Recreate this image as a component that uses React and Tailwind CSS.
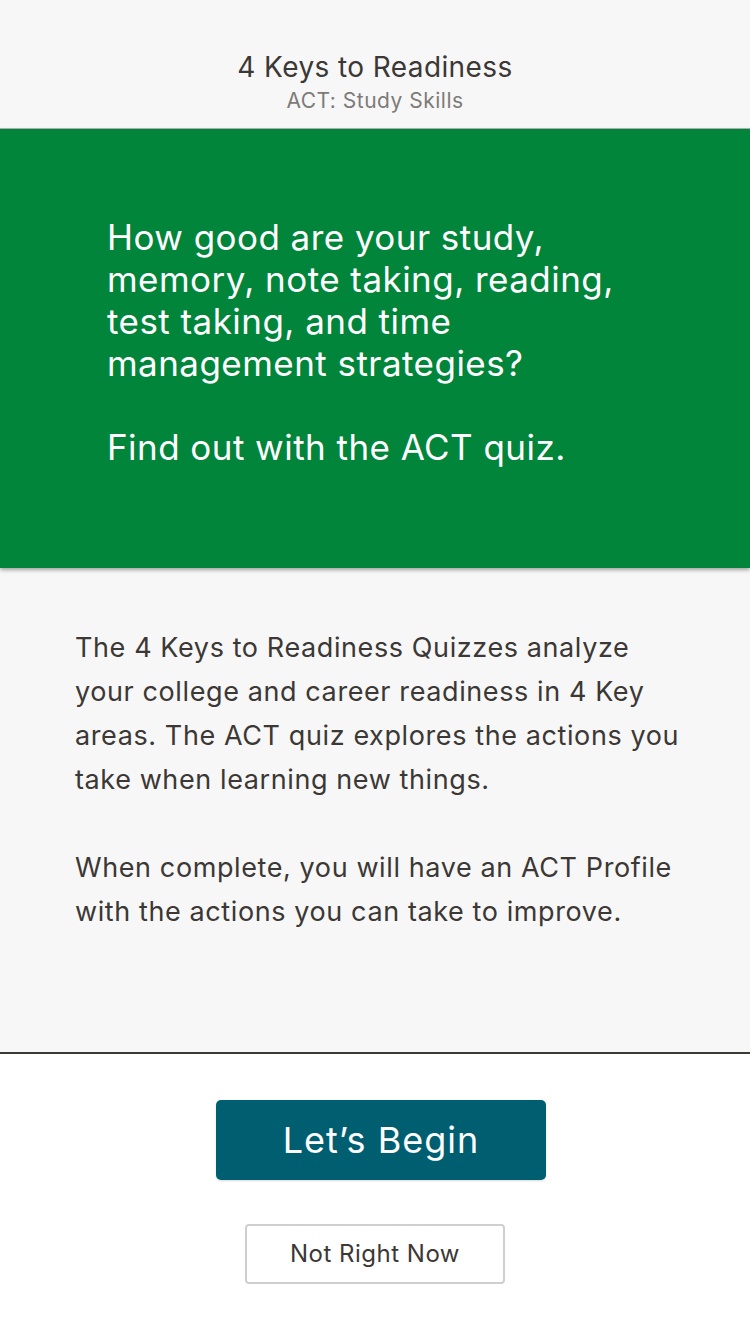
export default function App() {
  return (
    <div className="w-[750px] h-[1334px] flex flex-col bg-white text-[#3b3835]" style={{ fontFamily: 'Inter, "Noto Sans", sans-serif' }}>
      <header className="h-[129px] bg-[#f7f7f7] border-b border-[#b3b3b3] flex flex-col items-center pt-[48px]">
        <div className="text-[28px] leading-[38px] tracking-[0.4px] text-[#3b3835]">4 Keys to Readiness</div>
        <div className="text-[21px] leading-[26px] tracking-[0.5px] text-[#7d7b78] mt-[2px]">ACT: Study Skills</div>
      </header>
      <section className="h-[439px] bg-[#00853a] pl-[107px] pr-[100px] pt-[87px] text-white text-[35px] leading-[42px] tracking-[0.45px] relative z-10 shadow-[0_2px_4px_rgba(0,0,0,0.35)]">
        <p>How good are your study, memory, note taking, reading, test taking, and time management strategies?</p>
        <p className="mt-[42px]">Find out with the ACT quiz.</p>
      </section>
      <section className="h-[486px] bg-[#f7f7f7] border-b-2 border-[#3b3835] pl-[75px] pr-[60px] pt-[58px] text-[27px] leading-[44px] tracking-[0.6px]">
        <p>The 4 Keys to Readiness Quizzes analyze your college and career readiness in 4 Key areas. The ACT quiz explores the actions you take when learning new things.</p>
        <p className="mt-[44px]">When complete, you will have an ACT Profile with the actions you can take to improve.</p>
      </section>
      <div className="flex flex-col items-center pt-[46px]">
        <button className="ml-[12px] w-[330px] h-[80px] rounded-[5px] bg-[#005e71] text-white text-[36px] tracking-[1px] shadow-[0_1px_2px_rgba(0,0,0,0.15)]">Let’s Begin</button>
        <button className="mt-[44px] w-[260px] h-[60px] rounded-[4px] border-2 border-[#cfcfcf] bg-white text-[24px] tracking-[0.5px] text-[#3b3835]">Not Right Now</button>
      </div>
    </div>
  );
}
